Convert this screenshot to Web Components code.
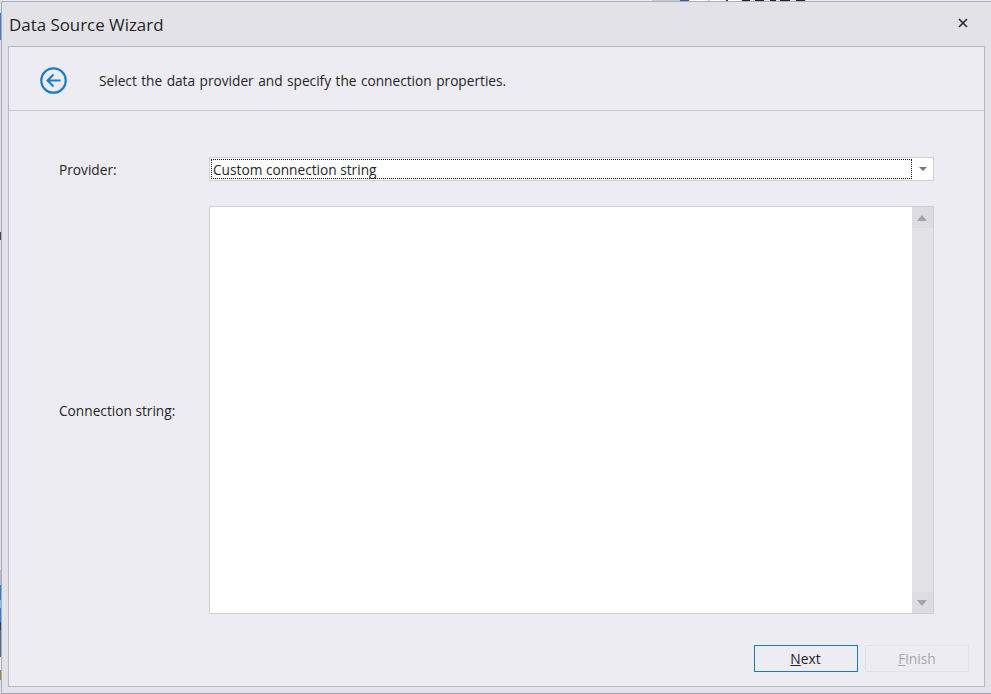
<!DOCTYPE html>
<html>
<head>
<meta charset="utf-8">
<title>Data Source Wizard</title>
<style>
  html, body { margin: 0; height: 100%; overflow: hidden; }
  /* slivers of the window behind the dialog, top row and left column */
  body {
    font: 13.7px "Open Sans", "Noto Sans", sans-serif;
    color: #252525;
    background:
      linear-gradient(90deg, #e9ebf2 652px, #c8cad8 652px 680px, #3f5a90 680px 689px, #fff 689px 708px, #c9c9d2 708px 710px, #fff 710px 726px,
        #333 726px 728px, #fff 728px 742px, #223 742px 750px, #dfe2ee 750px 755px, #223 755px 764px, #dfe2ee 764px 770px, #223 770px 776px,
        #dfe2ee 776px 780px, #223 780px 790px, #dfe2ee 790px 796px, #223 796px 805px, #e9ebf2 805px) 0 0 / 100% 1px no-repeat,
      linear-gradient(180deg, #dcdfec 13px, #3a80c8 13px 40px, #dcdfec 40px 232px, #5a4048 232px 240px, #dcdfec 240px 570px, #b9bac2 570px 585px,
        #2f7fd0 585px 600px, #7cc0ec 600px 608px, #2f7fd0 608px 622px, #2f3c66 622px 630px, #5a6490 630px 657px, #eceef4 657px 670px, #a87f50 670px 680px, #dcdfec 680px) 0 0 / 1px 100% no-repeat,
      #e9ebf2;
  }
</style>
</head>
<body>
<wizard-window caption="Data Source Wizard">
  <wizard-header slot="header">Select the data provider and specify the connection properties.</wizard-header>
  <provider-form></provider-form>
  <wizard-button slot="footer" default><u>N</u>ext</wizard-button>
  <wizard-button slot="footer" disabled><u>F</u>inish</wizard-button>
</wizard-window>

<script>
class WizardWindow extends HTMLElement {
  connectedCallback() {
    this.attachShadow({ mode: 'open' });
    this.shadowRoot.innerHTML = `
      <style>
        :host {
          display: flex;
          flex-direction: column;
          box-sizing: border-box;
          width: 991px;
          height: 694px;
          padding: 1px 0 0 1px;
        }
        .frame {
          flex: 1;
          display: flex;
          flex-direction: column;
          min-height: 0;
          background: #e2e2e8;
          border-top: 1px solid #a9aec4;
          border-left: 1px solid #a9aabb;
          border-bottom: 1px solid #a0a0b0;
        }
        .title {
          height: 44px;
          display: flex;
          align-items: center;
          justify-content: space-between;
          padding: 0 23.5px 0 7px;
          font-size: 16.9px;
        }
        .close { display: block; width: 10px; height: 10px; margin-bottom: 2px; }
        .panel {
          flex: 1;
          display: flex;
          flex-direction: column;
          min-height: 0;
          margin: 0 6px 6px 6px;
          background: #edecf2;
          border: 1px solid #b7b7c6;
        }
        .footer {
          display: flex;
          justify-content: flex-end;
          gap: 7px;
          padding: 0 15px 14px 0;
        }
      </style>
      <div class="frame">
        <div class="title">
          <span>${this.getAttribute('caption')}</span>
          <svg class="close" viewBox="0 0 10 10" aria-hidden="true"><path d="M1 1l8 8M9 1l-8 8" stroke="#2b2b2b" stroke-width="1.7" fill="none"/></svg>
        </div>
        <div class="panel">
          <slot name="header"></slot>
          <slot></slot>
          <div class="footer"><slot name="footer"></slot></div>
        </div>
      </div>`;
  }
}

class WizardHeader extends HTMLElement {
  connectedCallback() {
    this.attachShadow({ mode: 'open' });
    this.shadowRoot.innerHTML = `
      <style>
        :host {
          display: flex;
          align-items: center;
          gap: 32px;
          height: 64px;
          box-sizing: border-box;
          padding: 4px 0 0 31px;
          border-bottom: 1px solid #c8c8d4;
          word-spacing: 0.9px;
        }
        svg { display: block; width: 27px; height: 27px; flex: none; }
      </style>
      <svg viewBox="0 0 27 27" aria-hidden="true">
        <circle cx="13.5" cy="13.5" r="12.2" fill="none" stroke="#1a7cc2" stroke-width="2.2"/>
        <path d="M20.5 13.5H8M13.5 7.5l-6 6 6 6" fill="none" stroke="#1a7cc2" stroke-width="2"/>
      </svg>
      <span><slot></slot></span>`;
  }
}

class ProviderForm extends HTMLElement {
  connectedCallback() {
    this.attachShadow({ mode: 'open' });
    this.shadowRoot.innerHTML = `
      <style>
        :host {
          flex: 1;
          display: grid;
          grid-template-columns: 150px 725px;
          grid-template-rows: 24px 408px;
          row-gap: 25px;
          align-items: center;
          padding: 46px 0 0 50px;
          height: 534px;
          box-sizing: border-box;
        }
      </style>
      <span>Provider:</span>
      <combo-box>Custom connection string</combo-box>
      <span>Connection string:</span>
      <memo-edit></memo-edit>`;
  }
}

class ComboBox extends HTMLElement {
  connectedCallback() {
    this.attachShadow({ mode: 'open' });
    this.shadowRoot.innerHTML = `
      <style>
        :host {
          display: flex;
          box-sizing: border-box;
          height: 24px;
          background: #fff;
          border: 1px solid #cfcfd9;
          padding: 1px 0 1px 1px;
        }
        .value {
          flex: 1;
          display: flex;
          align-items: center;
          padding: 1px 0 0 1px;
          border: 1px dotted #111;
          line-height: 1;
        }
        .arrow {
          flex: none;
          width: 20px;
          padding-left: 1px;
          display: flex;
          align-items: center;
          justify-content: center;
        }
        .arrow i {
          border: 4px solid transparent;
          border-top: 4px solid #77777f;
          border-bottom: 0;
        }
      </style>
      <div class="value"><slot></slot></div>
      <div class="arrow"><i></i></div>`;
  }
}

class MemoEdit extends HTMLElement {
  connectedCallback() {
    this.attachShadow({ mode: 'open' });
    this.shadowRoot.innerHTML = `
      <style>
        :host {
          display: flex;
          box-sizing: border-box;
          height: 408px;
          background: #fff;
          border: 1px solid #cfcfd9;
        }
        .text { flex: 1; }
        .bar {
          flex: none;
          width: 21px;
          display: flex;
          flex-direction: column;
          justify-content: space-between;
          background: #e3e3e6;
        }
        .btn {
          height: 21px;
          box-sizing: border-box;
          padding-right: 1px;
          display: flex;
          align-items: center;
          justify-content: center;
          background: #dcdce2;
        }
        .up { border: 5px solid transparent; border-bottom: 6px solid #a3a3aa; border-top: 0; }
        .down { border: 5px solid transparent; border-top: 6px solid #a3a3aa; border-bottom: 0; }
      </style>
      <div class="text"></div>
      <div class="bar">
        <div class="btn"><i class="up"></i></div>
        <div class="btn"><i class="down"></i></div>
      </div>`;
  }
}

class WizardButton extends HTMLElement {
  connectedCallback() {
    this.attachShadow({ mode: 'open' });
    this.shadowRoot.innerHTML = `
      <style>
        :host {
          display: flex;
          align-items: center;
          justify-content: center;
          box-sizing: border-box;
          width: 104px;
          height: 27px;
          font-size: 13.8px;
          border: 1px solid #e2e2e8;
        }
        :host([default]) { border-color: #1a7cb0; padding-right: 1px; }
        :host([disabled]) { color: #a8a8ae; }
      </style>
      <slot></slot>`;
  }
}

customElements.define('wizard-window', WizardWindow);
customElements.define('wizard-header', WizardHeader);
customElements.define('provider-form', ProviderForm);
customElements.define('combo-box', ComboBox);
customElements.define('memo-edit', MemoEdit);
customElements.define('wizard-button', WizardButton);
</script>
</body>
</html>
